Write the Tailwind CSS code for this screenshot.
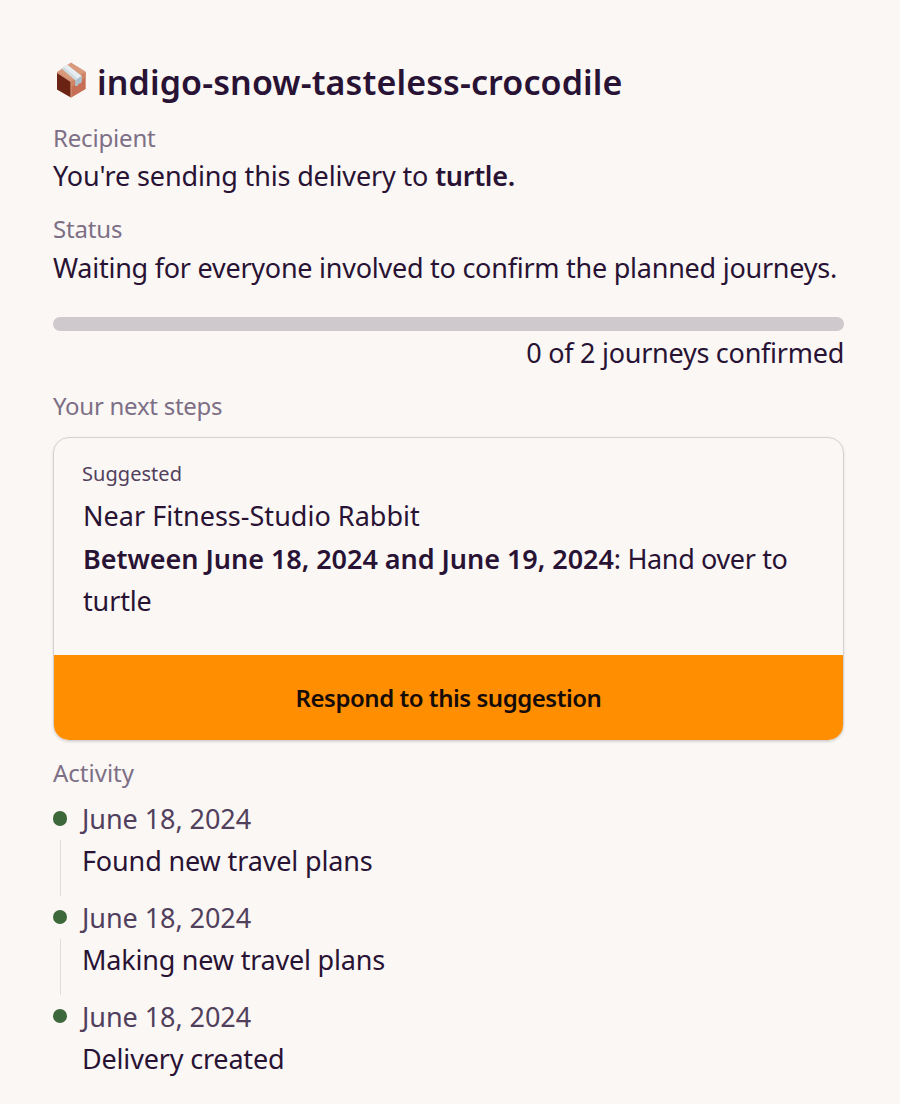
<!DOCTYPE html>
<html lang="en">
<head>
<meta charset="utf-8">
<title>Delivery</title>
<script src="https://cdn.jsdelivr.net/npm/@tailwindcss/browser@4"></script>
</head>
<body class="bg-[#fbf7f5] text-[#291334] font-['Noto_Sans',sans-serif] text-[27px] leading-[42px]">
<main class="flex h-[1104px] flex-col overflow-hidden whitespace-nowrap pl-[53px] pr-14 pt-[57px]">
  <h1 class="flex h-[49px] items-start gap-2 text-[34px] leading-[50px] font-semibold">
    <svg class="mt-[5px] h-9 w-9 shrink-0" viewBox="0 0 36 36" aria-hidden="true">
      <path fill="#d99a7c" d="M18 .5 32.500 9.500V27L18 35.500 4 27.500V10z"/>
      <path fill="#6b2414" d="M4 11 18 20v15.500L4 27.500z"/>
      <path fill="#c66f54" d="M18 20 32.500 10v17L18 35.500z"/>
      <path fill="#cf8465" d="M18 20 32.500 10v6L18 25z"/>
      <path fill="none" stroke="#d28b70" stroke-width="1.300" d="M4.500 10.500 18 19.500v15.500"/>
      <path fill="#cfdce1" d="M8.500 6.500 14.500 3 28.500 14v6l-1.500 1.500-1-.5-1.500 2.500-2 .500v-5.500z"/>
      <path fill="#e6eef1" d="M11 5 14.500 3 28.500 14l-4 2.500z"/>
      <path fill="#a9c0cc" d="m22.500 18.500 6-4.500v6l-1.500 1.500-1-.5-1.500 2.500-2 .500z"/>
    </svg>
    <span class="tracking-[0.12px]">indigo-snow-tasteless-crocodile</span>
  </h1>
  <h2 class="mt-[15px] text-[24px] leading-[34px] tracking-[-0.18px] text-[#7d6f85]">Recipient</h2>
  <p class="tracking-[-0.15px]">You're sending this delivery to <b class="font-semibold tracking-[-0.28px]">turtle.</b></p>
  <h2 class="mt-[15px] text-[24px] leading-[34px] tracking-[-0.16px] text-[#7d6f85]">Status</h2>
  <p class="mt-px tracking-[-0.25px]">Waiting for everyone involved to confirm the planned journeys.</p>
  <div class="mt-7 h-[14px] shrink-0 rounded-full bg-[#cfc9cd]"></div>
  <p class="mt-px text-right tracking-[-0.26px]">0 of 2 journeys confirmed</p>
  <h2 class="mt-[15px] text-[24px] leading-[34px] tracking-[-0.27px] text-[#7d6f85]">Your next steps</h2>
  <section class="mt-[14px] flex h-[304px] shrink-0 flex-col overflow-hidden rounded-2xl border border-[#d5d1d0] shadow-sm">
    <div class="flex-1 px-7 pl-[29px] pt-[22px]">
      <p class="-ml-px text-[20px] leading-7 tracking-[0.05px] text-[#51405c]">Suggested</p>
      <p class="mt-[7px] tracking-[0.02px]">Near Fitness-Studio Rabbit</p>
      <p class="mt-px"><b class="font-semibold tracking-[-0.04px]">Between June 18, 2024 and June 19, 2024</b><span class="tracking-[-0.36px]">: Hand over to</span></p>
      <p class="tracking-[-0.15px]">turtle</p>
    </div>
    <button class="h-[85px] shrink-0 bg-[#ff8f00] text-[24px] font-semibold tracking-[-0.47px] text-[#150b08]">Respond to this suggestion</button>
  </section>
  <h2 class="mt-[15px] text-[24px] leading-[34px] text-[#7d6f85]">Activity</h2>
  <ol class="mt-2 flex flex-col gap-[15px]">
    <li class="grid grid-cols-[14px_1fr] gap-x-[15px]">
      <div class="flex flex-col items-center pt-[13px]"><i class="-mb-px h-[15px] w-[14px] shrink-0 rounded-full bg-[#3d683b]"></i><i class="mt-[15px] h-14 w-px shrink-0 bg-[#e2dddd] -mb-[14px]"></i></div>
      <div><p class="tracking-[-0.06px] text-[#51405c]">June 18, 2024</p><p class="tracking-[-0.14px]">Found new travel plans</p></div>
    </li>
    <li class="grid grid-cols-[14px_1fr] gap-x-[15px]">
      <div class="flex flex-col items-center pt-[13px]"><i class="h-[14px] w-[14px] shrink-0 rounded-full bg-[#3d683b]"></i><i class="mt-[15px] h-14 w-px shrink-0 bg-[#e2dddd] -mb-[14px]"></i></div>
      <div><p class="tracking-[-0.06px] text-[#51405c]">June 18, 2024</p><p class="tracking-[-0.21px]">Making new travel plans</p></div>
    </li>
    <li class="grid grid-cols-[14px_1fr] gap-x-[15px]">
      <div class="pt-[13px]"><i class="block h-[14px] w-[14px] rounded-full bg-[#3d683b]"></i></div>
      <div><p class="tracking-[-0.06px] text-[#51405c]">June 18, 2024</p><p class="tracking-[-0.18px]">Delivery created</p></div>
    </li>
  </ol>
</main>
</body>
</html>
